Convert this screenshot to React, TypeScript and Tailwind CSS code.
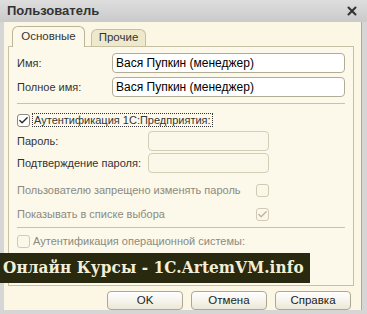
import { Check, X } from 'lucide-react';

function Field({ value }: { value?: string }) {
  return (
    <div className="h-[20px] flex-1 rounded-[4px] border border-[#b3ac94] bg-white px-[3px] text-[12px] leading-[18px] text-black">
      {value}
    </div>
  );
}

function Box({ checked, disabled }: { checked?: boolean; disabled?: boolean }) {
  return (
    <span
      className={`flex h-[13px] w-[13px] shrink-0 items-center justify-center rounded-[3px] border ${
        disabled ? 'border-[#d2cbb4] bg-[#fbf8ea]' : 'border-[#8d8a7c] bg-white'
      }`}
    >
      {checked && (
        <Check size={11} strokeWidth={3} className={disabled ? 'text-[#b8b6ac]' : 'text-[#2b2b2b]'} />
      )}
    </span>
  );
}

function Button({ label }: { label: string }) {
  return (
    <button
      type="button"
      className="h-[19px] w-[76px] rounded-[4px] border border-[#aea893] bg-gradient-to-b from-[#ffffff] to-[#ece8d8] text-[11.5px] leading-[17px] text-[#222]"
    >
      {label}
    </button>
  );
}

export default function App() {
  return (
    <div className="relative h-[314px] w-[367px] overflow-hidden whitespace-nowrap bg-[#d6d6d6] font-['Liberation_Sans',Arial,sans-serif]">
      <div className="flex h-[22px] items-center justify-between bg-gradient-to-b from-[#dedede] to-[#cacaca] pl-[7px] pr-[8px]">
        <span className="text-[13px] font-bold text-[#333]">Пользователь</span>
        <X size={14} strokeWidth={3.5} className="text-[#333]" />
      </div>
      <div className="ml-[4px] mr-[5px] flex h-[288px] flex-col border-r border-[#a9a9a9] bg-[#fbf7e4] px-[4px] pt-[4px]">
        <div className="flex items-end gap-[6px] pl-[4px]">
          <div className="z-10 -mb-px flex h-[21px] w-[73px] items-center justify-center rounded-t-[6px] border border-b-0 border-[#bdb497] bg-[#fcf9ea] text-[11.5px] text-[#333]">
            Основные
          </div>
          <div className="flex h-[17px] w-[55px] items-center justify-center rounded-t-[6px] border border-b-0 border-[#c6be9f] bg-[#efe9cc] text-[11.5px] text-[#333]">
            Прочие
          </div>
        </div>
        <div className="mr-[3px] flex h-[240px] flex-col border border-[#c8c0a2] bg-[#fcf9ea] px-[8px] pt-[6px] text-[11px] text-[#333]">
          <div className="flex h-[20px] items-center">
            <span className="w-[95px]">Имя:</span>
            <Field value="Вася Пупкин (менеджер)" />
          </div>
          <div className="mt-[4px] flex h-[20px] items-center">
            <span className="w-[95px]">Полное имя:</span>
            <Field value="Вася Пупкин (менеджер)" />
          </div>
          <div className="mt-[6px] h-px bg-[#c9c2a6]" />
          <div className="mt-[9px] flex h-[14px] items-center gap-[2px]">
            <Box checked />
            <span className="border border-dotted border-[#333] px-px leading-[12px]">
              Аутентификация 1С:Предприятия:
            </span>
          </div>
          <div className="mt-[4px] flex h-[20px] items-center">
            <span className="w-[131px]">Пароль:</span>
            <div className="h-[20px] w-[121px] rounded-[4px] border border-[#d4cdb6] bg-[#fbf8ea]" />
          </div>
          <div className="mt-[2px] flex h-[20px] items-center">
            <span className="w-[131px]">Подтверждение пароля:</span>
            <div className="h-[20px] w-[121px] rounded-[4px] border border-[#d4cdb6] bg-[#fbf8ea]" />
          </div>
          <div className="mt-[7px] flex h-[20px] items-center text-[#8c8a80]">
            <span className="w-[239px]">Пользователю запрещено изменять пароль</span>
            <Box disabled />
          </div>
          <div className="mt-[4px] flex h-[20px] items-center text-[#8c8a80]">
            <span className="w-[239px]">Показывать в списке выбора</span>
            <Box checked disabled />
          </div>
          <div className="mt-[3px] h-px bg-[#c9c2a6]" />
          <div className="mt-[6px] flex h-[14px] items-center gap-[3px] text-[#8c8a80]">
            <Box disabled />
            <span>Аутентификация операционной системы:</span>
          </div>
        </div>
        <div className="mt-[5px] flex justify-end gap-[8px] pr-[6px]">
          <Button label="OK" />
          <Button label="Отмена" />
          <Button label="Справка" />
        </div>
      </div>
      <div className="absolute left-0 top-[253px] flex h-[30px] w-[310px] items-center bg-[#29290f] pl-[3px] font-['DejaVu_Serif',serif] text-[17px] font-bold font-stretch-condensed tracking-[0.1px] text-[#f3eed7]">
        Онлайн Курсы - 1C.ArtemVM.info
      </div>
    </div>
  );
}
